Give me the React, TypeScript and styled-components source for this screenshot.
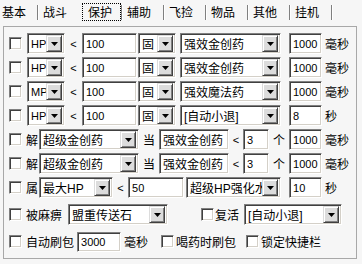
import React from 'react';
import styled, { createGlobalStyle, css } from 'styled-components';

const GlobalStyle = createGlobalStyle`
  html, body { margin: 0; padding: 0; background: #f6f6f6; }
  body {
    width: 362px; height: 264px; overflow: hidden;
    font-family: "Liberation Sans", "Noto Sans CJK SC", sans-serif;
    font-size: 12px; color: #000;
  }
`;

const sunken = css`
  box-sizing: border-box;
  border-top: 1px solid #808080;
  border-left: 1px solid #808080;
  border-bottom: 1px solid #ffffff;
  border-right: 1px solid #ffffff;
  box-shadow: inset 1px 1px 0 #404040, inset -1px -1px 0 #d4d0c8;
  background: #ffffff;
`;

const Window = styled.div`
  width: 362px;
  height: 264px;
  display: flex;
  flex-direction: column;
`;

const TabBar = styled.div`
  display: flex;
  height: 26px;
  padding-top: 3px;
  box-sizing: border-box;
`;

const Tab = styled.div<{ $w: number; $pl: number; $sep?: boolean }>`
  position: relative;
  box-sizing: border-box;
  width: ${(p) => p.$w}px;
  height: 17px;
  padding-left: ${(p) => p.$pl}px;
  font-family: "Noto Sans CJK SC", sans-serif;
  font-size: 12px;
  line-height: 17px;
  border-right: 2px solid transparent;
  ${(p) =>
    p.$sep &&
    css`
      &::after {
        content: '';
        position: absolute;
        right: -2px;
        top: 2px;
        width: 1px;
        height: 15px;
        background: #808080;
        border-right: 1px solid #ffffff;
      }
    `}
`;

const FocusRect = styled.span`
  position: absolute;
  left: 1px;
  top: 0;
  right: 0;
  bottom: -1px;
  border: 1px dotted #000;
  pointer-events: none;
`;

const Panel = styled.div`
  box-sizing: border-box;
  margin-left: 3px;
  width: 354px;
  height: 233px;
  border: 1px solid #a8a8a8;
  padding: 6px 0 0 5px;
  display: flex;
  flex-direction: column;
  gap: 3px;
`;

const Row = styled.div<{ $mt?: number }>`
  display: flex;
  align-items: center;
  height: 21px;
  margin-top: ${(p) => p.$mt ?? 0}px;
`;

const Check = styled.span<{ $ml?: number }>`
  ${sunken}
  flex: none;
  width: 13px;
  height: 13px;
  margin-left: ${(p) => p.$ml ?? 0}px;
`;

const Label = styled.span<{ $ml?: number; $w?: number; $latin?: boolean }>`
  flex: none;
  margin-left: ${(p) => p.$ml ?? 0}px;
  ${(p) => (p.$w ? `width: ${p.$w}px; text-align: center;` : '')}
  font-family: ${(p) => (p.$latin ? '"Liberation Sans", sans-serif' : '"Noto Sans CJK SC", sans-serif')};
  font-size: ${(p) => (p.$latin ? 11 : 12)}px;
  white-space: nowrap;
`;

const Edit = styled.div<{ $w: number; $ml?: number; $h?: number; $cjk?: boolean }>`
  ${sunken}
  flex: none;
  width: ${(p) => p.$w}px;
  height: ${(p) => p.$h ?? 21}px;
  margin-left: ${(p) => p.$ml ?? 0}px;
  padding-left: 3px;
  display: flex;
  align-items: center;
  font-family: ${(p) => (p.$cjk ? '"Noto Sans CJK SC", sans-serif' : '"Liberation Sans", sans-serif')};
  font-size: ${(p) => (p.$cjk ? 12 : 11)}px;
  white-space: nowrap;
  overflow: hidden;
`;

const Combo = styled.div<{ $w: number; $ml?: number }>`
  ${sunken}
  flex: none;
  width: ${(p) => p.$w}px;
  height: 21px;
  margin-left: ${(p) => p.$ml ?? 0}px;
  padding: 2px;
  display: flex;
  align-items: center;
`;

const ComboText = styled.span<{ $latin?: boolean }>`
  flex: 1;
  min-width: 0;
  padding-left: 1px;
  overflow: hidden;
  white-space: nowrap;
  font-family: "Liberation Sans", "Noto Sans CJK SC", sans-serif;
  font-size: ${(p) => (p.$latin ? 11 : 12)}px;
`;

const DropBtn = styled.span`
  flex: none;
  box-sizing: border-box;
  width: 16px;
  height: 17px;
  background: #dcdcdc;
  border-top: 1px solid #dcdcdc;
  border-left: 1px solid #dcdcdc;
  border-right: 1px solid #404040;
  border-bottom: 1px solid #404040;
  box-shadow: inset 1px 1px 0 #ffffff, inset -1px -1px 0 #808080;
  display: flex;
  align-items: center;
  justify-content: center;
`;

const Arrow = () => (
  <svg width="7" height="4" viewBox="0 0 7 4">
    <polygon points="0,0 7,0 3.5,4" fill="#000" />
  </svg>
);

const Drop = ({ w, ml, text, latin }: { w: number; ml?: number; text: string; latin?: boolean }) => (
  <Combo $w={w} $ml={ml}>
    <ComboText $latin={latin}>{text}</ComboText>
    <DropBtn>
      <Arrow />
    </DropBtn>
  </Combo>
);

const tabs = ['基本', '战斗', '保护', '辅助', '飞捡', '物品', '其他', '挂机'];

export default function App() {
  return (
    <Window>
      <GlobalStyle />
      <TabBar>
        {tabs.map((t, i) => (
          <Tab
            key={t}
            $w={i === 0 ? 39 : 42}
            $pl={i === 0 ? 2 : i === 2 ? 7 : 4}
            $sep={i !== 1}
          >
            {t}
            {i === 2 && <FocusRect />}
          </Tab>
        ))}
      </TabBar>
      <Panel>
        <Row>
          <Check />
          <Drop w={38} ml={5} text="HP" latin />
          <Label $w={17} $latin>&lt;</Label>
          <Edit $w={55}>100</Edit>
          <Drop w={38} ml={1} text="固" />
          <Drop w={101} ml={4} text="强效金创药" />
          <Edit $w={33} $ml={8}>1000</Edit>
          <Label $ml={3}>毫秒</Label>
        </Row>
        <Row>
          <Check />
          <Drop w={38} ml={5} text="HP" latin />
          <Label $w={17} $latin>&lt;</Label>
          <Edit $w={55}>100</Edit>
          <Drop w={38} ml={1} text="固" />
          <Drop w={101} ml={4} text="强效金创药" />
          <Edit $w={33} $ml={8}>1000</Edit>
          <Label $ml={3}>毫秒</Label>
        </Row>
        <Row>
          <Check />
          <Drop w={38} ml={5} text="MP" latin />
          <Label $w={17} $latin>&lt;</Label>
          <Edit $w={55}>100</Edit>
          <Drop w={38} ml={1} text="固" />
          <Drop w={101} ml={4} text="强效魔法药" />
          <Edit $w={33} $ml={8}>1000</Edit>
          <Label $ml={3}>毫秒</Label>
        </Row>
        <Row>
          <Check />
          <Drop w={38} ml={5} text="HP" latin />
          <Label $w={17} $latin>&lt;</Label>
          <Edit $w={55}>100</Edit>
          <Drop w={38} ml={1} text="固" />
          <Drop w={101} ml={4} text="[自动小退]" />
          <Edit $w={33} $ml={8}>8</Edit>
          <Label $ml={3}>秒</Label>
        </Row>
        <Row>
          <Check />
          <Label $ml={4}>解</Label>
          <Drop w={100} ml={1} text="超级金创药" />
          <Label $ml={4}>当</Label>
          <Edit $w={70} $ml={4} $cjk>强效金创药</Edit>
          <Label $w={14} $latin>&lt;</Label>
          <Edit $w={26}>3</Edit>
          <Label $w={20}>个</Label>
          <Edit $w={33}>1000</Edit>
          <Label $ml={3}>毫秒</Label>
        </Row>
        <Row>
          <Check />
          <Label $ml={4}>解</Label>
          <Drop w={100} ml={1} text="超级金创药" />
          <Label $ml={4}>当</Label>
          <Edit $w={70} $ml={4} $cjk>强效金创药</Edit>
          <Label $w={14} $latin>&lt;</Label>
          <Edit $w={26}>3</Edit>
          <Label $w={20}>个</Label>
          <Edit $w={33}>1000</Edit>
          <Label $ml={3}>毫秒</Label>
        </Row>
        <Row>
          <Check />
          <Label $ml={4}>属</Label>
          <Drop w={74} ml={1} text="最大HP" />
          <Label $w={15} $latin>&lt;</Label>
          <Edit $w={56}>50</Edit>
          <Drop w={95} ml={2} text="超级HP强化水" />
          <Edit $w={33} $ml={8}>10</Edit>
          <Label $ml={3}>秒</Label>
        </Row>
        <Row $mt={3}>
          <Check />
          <Label $ml={4}>被麻痹</Label>
          <Drop w={100} ml={6} text="盟重传送石" />
          <Check $ml={33} />
          <Label $ml={1}>复活</Label>
          <Drop w={98} ml={5} text="[自动小退]" />
        </Row>
        <Row $mt={3}>
          <Check />
          <Label $ml={4}>自动刷包</Label>
          <Edit $w={44} $ml={3} $h={20}>3000</Edit>
          <Label $ml={3}>毫秒</Label>
          <Check $ml={13} />
          <Label $ml={2}>喝药时刷包</Label>
          <Check $ml={10} />
          <Label $ml={2}>锁定快捷栏</Label>
        </Row>
      </Panel>
    </Window>
  );
}
